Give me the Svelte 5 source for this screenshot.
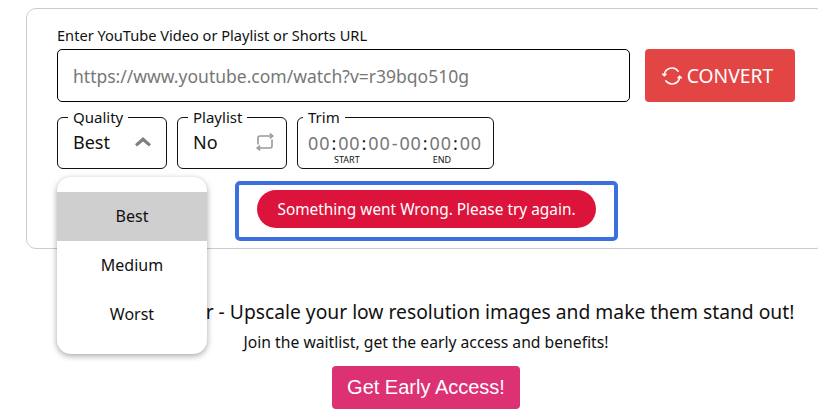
<script>
  let qualities = ['Best', 'Medium', 'Worst'];
  let quality = 'Best';
</script>

<div class="page">
  <section class="card">
    <label class="url-label" for="url">Enter YouTube Video or Playlist or Shorts URL</label>
    <div class="url-row">
      <input id="url" class="url-input" placeholder="https://www.youtube.com/watch?v=r39bqo510g" />
      <button class="convert">
        <svg width="20" height="20" viewBox="0 0 20 20" fill="none" stroke="currentColor" stroke-width="1.5" stroke-linecap="round">
          <path d="M2.300 8.500A7.800 7.800 0 0 1 16.200 5.200" />
          <path d="M17.700 11.500A7.800 7.800 0 0 1 3.800 14.800" />
          <path d="M.7 8l1.600 1.700L4 8.200" />
          <path d="M19.300 12l-1.600-1.700L16 11.800" />
        </svg>
        CONVERT
      </button>
    </div>

    <div class="options">
      <div class="quality-wrap">
        <fieldset class="field">
          <legend>Quality</legend>
          <div class="field-body">
            <span>{quality}</span>
            <svg width="16" height="10" viewBox="0 0 16 10" fill="#808080">
              <path d="M8 0l8 7.200-2 2.300L8 4.500 2 9.500 0 7.200z" />
            </svg>
          </div>
        </fieldset>
        <ul class="menu">
          {#each qualities as q}
            <li class:selected={q === quality}>{q}</li>
          {/each}
        </ul>
      </div>

      <fieldset class="field">
        <legend>Playlist</legend>
        <div class="field-body">
          <span>No</span>
          <svg class="repeat" width="18" height="18" viewBox="0 0 18 18" fill="none" stroke="#999" stroke-width="1.6">
            <path d="M2 11.500V5A2 2 0 0 1 4 3h12" />
            <path d="M16 6.500V13a2 2 0 0 1-2 2H2" />
            <path d="M13.800.6 16.800 3l-3 2.400" />
            <path d="M4.200 12.600 1.200 15l3 2.400" />
          </svg>
        </div>
      </fieldset>

      <fieldset class="field trim">
        <legend>Trim</legend>
        <div class="time">
          <span>00</span><b>:</b><span>00</span><b>:</b><span>00</span><i>-</i><span>00</span><b>:</b><span>00</span><b>:</b><span>00</span>
        </div>
        <div class="time-labels">
          <span>START</span>
          <span>END</span>
        </div>
      </fieldset>
    </div>

    <div class="alert-box">
      <div class="alert-pill">Something went Wrong. Please try again.</div>
    </div>
  </section>

  <section class="promo">
    <h2>Image Upscaler - Upscale your low resolution images and make them stand out!</h2>
    <p>Join the waitlist, get the early access and benefits!</p>
    <button class="early">Get Early Access!</button>
  </section>
</div>

<style>
  :global(body) {
    margin: 0;
    background: #fff;
    overflow: hidden;
  }

  .page {
    width: 800px;
    margin-left: 26px;
    padding-top: 8px;
    font-family: "Noto Sans", "Liberation Sans", sans-serif;
    color: #111;
  }

  .card {
    box-sizing: border-box;
    height: 241px;
    padding: 16px 30px 0;
    border: 1px solid #ccc;
    border-radius: 10px;
  }

  .url-label {
    display: block;
    font-size: 14.6px;
    line-height: 20px;
    margin-bottom: 4px;
  }

  .url-row {
    display: flex;
    gap: 15px;
  }

  .url-input {
    box-sizing: border-box;
    width: 573px;
    height: 53px;
    padding: 0 15px;
    border: 1px solid #000;
    border-radius: 5px;
    font-family: inherit;
    font-size: 17.5px;
    outline: none;
  }

  .url-input::placeholder {
    color: #777;
    opacity: 1;
  }

  .convert {
    display: flex;
    align-items: center;
    justify-content: center;
    gap: 5px;
    width: 150px;
    height: 53px;
    padding: 0 5px 0 0;
    border: 0;
    border-radius: 4px;
    background: #e34545;
    color: #fff;
    font-family: inherit;
    font-size: 19.3px;
    font-weight: 400;
  }

  .options {
    display: flex;
    align-items: flex-start;
    gap: 10px;
    margin-top: 5px;
  }

  .quality-wrap {
    position: relative;
  }

  .field {
    box-sizing: border-box;
    width: 110px;
    min-width: 0;
    height: 62px;
    margin: 0;
    padding: 0 15px;
    border: 1px solid #111;
    border-radius: 6px;
  }

  .field legend {
    padding: 0 5px;
    margin-left: -5px;
    font-size: 15px;
    line-height: 20px;
  }

  .field-body {
    display: flex;
    align-items: center;
    justify-content: space-between;
    height: 30px;
    font-size: 18px;
  }

  .repeat {
    margin-right: -3px;
  }

  .trim {
    width: 197px;
    padding: 0 10px;
  }

  .time {
    display: flex;
    height: 25px;
    align-items: center;
    margin-top: 3px;
    font-size: 18px;
    letter-spacing: 0.9px;
    color: #777;
  }

  .time b {
    margin: 0 1px;
    font-weight: 400;
    color: #222;
  }

  .time i {
    margin: 0 1px;
    font-style: normal;
  }

  .time-labels {
    display: flex;
    font-size: 9px;
    line-height: 9px;
    color: #111;
  }

  .time-labels span:first-child {
    margin-left: 26px;
  }

  .time-labels span:last-child {
    margin-left: 73px;
  }

  .menu {
    position: absolute;
    top: 70px;
    left: 0;
    z-index: 2;
    box-sizing: border-box;
    width: 150px;
    height: 177px;
    margin: 0;
    padding: 15px 0;
    list-style: none;
    background: #fff;
    border-radius: 14px;
    box-shadow: 0 2px 6px rgba(0, 0, 0, 0.35);
    overflow: hidden;
  }

  .menu li {
    height: 49px;
    line-height: 49px;
    text-align: center;
    font-size: 16px;
  }

  .menu li.selected {
    background: #cfcfcf;
  }

  .alert-box {
    box-sizing: border-box;
    width: 383px;
    height: 60px;
    margin: 12px 0 0 178px;
    padding: 5px 18px;
    border: 4px solid #3c6fe0;
    border-radius: 5px;
  }

  .alert-pill {
    height: 38px;
    line-height: 39px;
    text-align: center;
    border-radius: 19px;
    background: #dc143c;
    color: #fff;
    font-size: 15.4px;
  }

  .promo {
    text-align: center;
    padding-top: 50px;
  }

  .promo h2 {
    margin: 0;
    padding-left: 14px;
    font-size: 19.25px;
    font-weight: 400;
    line-height: 26px;
    white-space: nowrap;
  }

  .promo p {
    margin: 7px 0 0;
    font-size: 15.7px;
    line-height: 20px;
  }

  .early {
    width: 188px;
    height: 43px;
    margin-top: 14px;
    border: 0;
    border-radius: 4px;
    background: #dc3173;
    color: #fff;
    font-family: "Liberation Sans", Arial, sans-serif;
    font-size: 20px;
  }
</style>
